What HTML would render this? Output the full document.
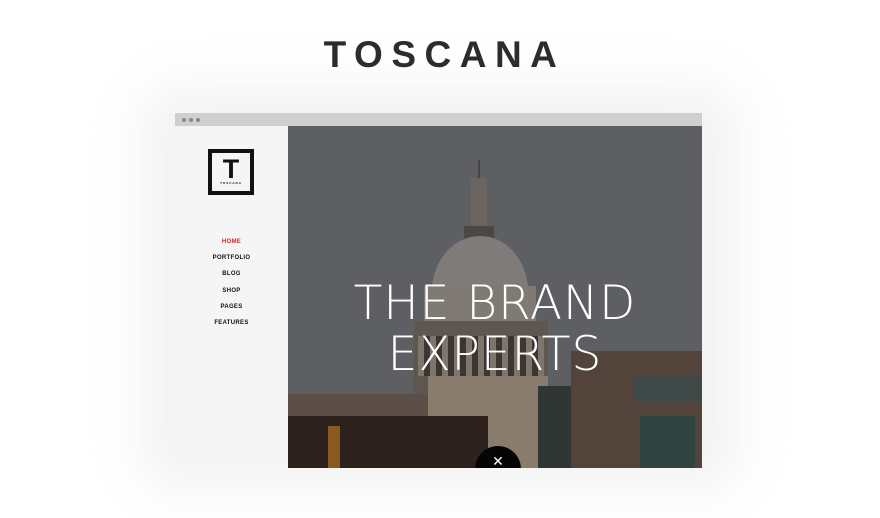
<!DOCTYPE html>
<html><head><style>
*{margin:0;padding:0;box-sizing:border-box}
body{width:880px;height:518px;background:#fff;position:relative;overflow:hidden;font-family:"Liberation Sans",sans-serif}
.halo{position:absolute;left:140px;top:85px;width:600px;height:405px;background:#f3f3f3;filter:blur(25px);border-radius:30px}
h1{position:absolute;left:0;width:880px;top:34px;text-align:center;font-size:37px;font-weight:bold;letter-spacing:8.5px;color:#2c2c2c;padding-left:9px}
.win{position:absolute;left:175px;top:113px;width:527px;height:355px;background:#f4f4f4}
.bar{height:13px;background:#cfcfcf;position:relative}
.bar i{position:absolute;top:5px;width:4px;height:4px;border-radius:50%;background:#888}
.side{position:absolute;left:0;top:13px;width:113px;height:342px;background:#f5f5f5}
.logo{position:absolute;left:33px;top:23px;width:46px;height:46px;border:4px solid #111;text-align:center}
.logo b{display:block;font-size:27px;line-height:24px;margin-top:4px;color:#111}
.logo s{display:block;text-decoration:none;font-size:3px;font-weight:bold;letter-spacing:1px}
.nav{position:absolute;top:113px;width:113px;text-align:center;font-size:6px;font-weight:bold;letter-spacing:.3px;color:#111}
.nav div{height:16.2px}
.img{position:absolute;left:113px;top:13px;width:414px;height:342px;background:#5e5f63;overflow:hidden}
.img div{position:absolute}
.t{position:absolute;width:414px;text-align:center;color:#fff;font-size:47px;letter-spacing:1px;font-family:"DejaVu Sans","Liberation Sans",sans-serif;font-weight:200}
</style></head><body>
<div class="halo"></div>
<h1>TOSCANA</h1>
<div class="win">
<div class="bar"><i style="left:7px"></i><i style="left:14px"></i><i style="left:21px"></i></div>
<div class="side">
<div class="logo"><b>T</b><s>TOSCANA</s></div>
<div class="nav"><div style="color:#e02020">HOME</div><div>PORTFOLIO</div><div>BLOG</div><div>SHOP</div><div>PAGES</div><div>FEATURES</div></div>
</div>
<div class="img">
<div style="left:190px;top:34px;width:2px;height:20px;background:#4a4340"></div>
<div style="left:183px;top:52px;width:16px;height:60px;background:#6b6560"></div>
<div style="left:176px;top:100px;width:30px;height:14px;background:#4d4744"></div>
<div style="left:144px;top:110px;width:96px;height:100px;border-radius:50% 50% 0 0/55% 55% 0 0;background:#7e7b78"></div>
<div style="left:136px;top:160px;width:112px;height:40px;background:#807a74"></div>
<div style="left:126px;top:195px;width:134px;height:150px;background:#5e564f"></div>
<div style="left:130px;top:210px;width:126px;height:40px;background:repeating-linear-gradient(90deg,#7e766d 0 6px,#3c3632 6px 12px)"></div>
<div style="left:140px;top:250px;width:120px;height:92px;background:#8a7c6d"></div>
<div style="left:0;top:268px;width:140px;height:80px;background:#5b4f47"></div>
<div style="left:0;top:290px;width:200px;height:60px;background:#2d211d"></div>
<div style="left:40px;top:300px;width:12px;height:50px;background:#8a5a22"></div>
<div style="left:250px;top:260px;width:40px;height:90px;background:#2f3634"></div>
<div style="left:283px;top:225px;width:131px;height:120px;background:#53443b"></div>
<div style="left:345px;top:250px;width:69px;height:25px;background:#3e4948"></div>
<div style="left:352px;top:290px;width:55px;height:55px;background:#314341"></div>
<div class="t" style="top:150px">THE BRAND</div>
<div class="t" style="top:201px">EXPERTS</div>
<div style="left:187px;top:320px;width:46px;height:46px;border-radius:50%;background:#050505;color:#fff;text-align:center;font-size:14px;line-height:30px">✕</div>
</div>
</div>
</body></html>
